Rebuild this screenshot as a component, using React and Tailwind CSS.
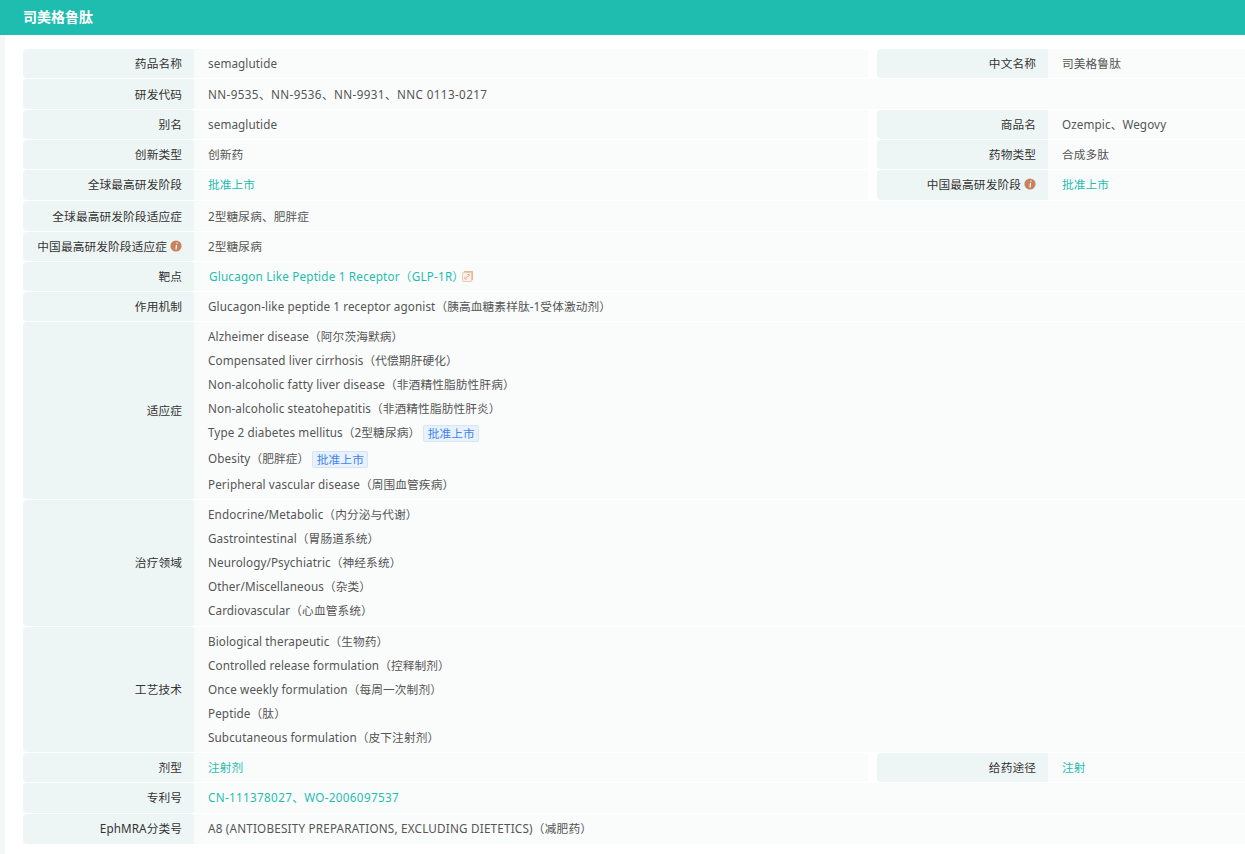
const Info = () => (
  <svg width="12" height="12" viewBox="0 0 12 12" className="ml-[3px] shrink-0">
    <circle cx="6" cy="6" r="5.6" fill="#c8835e" />
    <path d="M6.4 2.5h1.2v1.2H6.4zM5.9 5h1.2l-.5 4.4H5.4z" fill="#fff" />
  </svg>
);

const Ext = () => (
  <svg width="11" height="11" viewBox="0 0 12 12" className="-ml-[2px] shrink-0">
    <rect x="2" y="0" width="10" height="10" rx="1" fill="#e8b596" />
    <rect x="0.5" y="1.5" width="10" height="10" rx="1" fill="#fbf1ea" stroke="#e8c3ab" />
    <path d="M3.5 8 7.5 5M6 3.8l1.8-.2.3 1.8M4.9 9 3 8.4l.2-1.8" fill="none" stroke="#dba684" strokeWidth="1" />
  </svg>
);

const Tag = ({ children }) => (
  <span className="ml-[3px] mt-[2px] inline-flex h-[17px] w-[56px] items-center justify-center rounded-[2px] border border-[#d6e4fb] bg-[#e9f1fd] text-[11.7px] text-[#3f86ee]">
    {children}
  </span>
);

const Label = ({ children, info, pad }) => (
  <div className={`flex w-[171px] shrink-0 items-center justify-end rounded-l-[4px] bg-[#eef6f5] pr-[12px] text-[#333] ${pad}`}>
    {children}
    {info && <Info />}
  </div>
);

const Value = ({ children, className = "text-[#555]", pad }) => (
  <div className={`flex min-w-0 flex-1 flex-col justify-center bg-[#fafcfb] pl-[14px] ${className} ${pad}`}>
    {children}
  </div>
);

const Row = ({ h, label, info, right, children, className, pad = "pb-[0.5px]" }) => (
  <div className="flex" style={{ height: h }}>
    <Label info={info} pad={pad}>{label}</Label>
    <Value className={className} pad={pad}>{children}</Value>
    {right && (
      <>
        <div className="w-[9px] shrink-0 bg-white" />
        <Label info={right.info} pad={pad}>{right.label}</Label>
        <Value className={`w-[197px] flex-none ${right.className || "text-[#555]"}`} pad={pad}>{right.value}</Value>
      </>
    )}
  </div>
);

const Lines = ({ items }) => (
  <div className="flex flex-col">
    {items.map((t) => (
      <div key={t} className="flex h-[24px] items-center whitespace-nowrap">{t}</div>
    ))}
  </div>
);

const teal = "text-[#1fbdaf]";

export default function App() {
  return (
    <div
      className="h-[854px] w-[1245px] overflow-hidden bg-white text-[11.7px] leading-[18px] tracking-[0.1px]"
      style={{ fontFamily: '"Noto Sans","Noto Sans CJK SC",sans-serif' }}
    >
      <div className="flex h-[35px] items-center bg-[#1fbdaf] pb-[1px] pl-[23px] text-[14px] font-bold tracking-normal text-white">司美格鲁肽</div>
      <div className="flex h-[819px]">
        <div className="w-[5px] bg-[#f5f6f8]" />
        <div className="flex-1 pl-[18px] pt-[14px]">
          <div className="flex flex-col gap-[1px]">
            <Row h={29} label="药品名称" right={{ label: "中文名称", value: "司美格鲁肽" }}>semaglutide</Row>
            <Row h={30} pad="pb-0" label="研发代码"><span className="tracking-[0.38px]">NN-9535、NN-9536、NN-9931、NNC 0113-0217</span></Row>
            <Row h={29} label="别名" right={{ label: "商品名", value: "Ozempic、Wegovy" }}>semaglutide</Row>
            <Row h={29} label="创新类型" right={{ label: "药物类型", value: "合成多肽" }}>创新药</Row>
            <Row h={30} pad="pb-[2px]" label="全球最高研发阶段" className={teal} right={{ label: "中国最高研发阶段", info: true, value: "批准上市", className: teal }}>批准上市</Row>
            <Row h={30} pad="pb-0" label="全球最高研发阶段适应症">2型糖尿病、肥胖症</Row>
            <Row h={29} label="中国最高研发阶段适应症" info>2型糖尿病</Row>
            <Row h={29} label="靶点">
              <div className={`flex items-center pl-[1px] tracking-[0.2px] ${teal}`}>Glucagon Like Peptide 1 Receptor（GLP-1R）<Ext /></div>
            </Row>
            <Row h={29} label="作用机制">Glucagon-like peptide 1 receptor agonist（胰高血糖素样肽-1受体激动剂）</Row>
            <Row h={177} label="适应症">
              <div className="flex flex-col">
                <div className="flex h-[24px] items-center">Alzheimer disease（阿尔茨海默病）</div>
                <div className="flex h-[24px] items-center">Compensated liver cirrhosis（代偿期肝硬化）</div>
                <div className="flex h-[24px] items-center">Non-alcoholic fatty liver disease（非酒精性脂肪性肝病）</div>
                <div className="flex h-[24px] items-center">Non-alcoholic steatohepatitis（非酒精性脂肪性肝炎）</div>
                <div className="flex h-[26px] items-center pb-[2px]">Type 2 diabetes mellitus（2型糖尿病）<Tag>批准上市</Tag></div>
                <div className="flex h-[26px] items-center pb-[2px]">Obesity（肥胖症）<Tag>批准上市</Tag></div>
                <div className="flex h-[24px] items-center">Peripheral vascular disease（周围血管疾病）</div>
              </div>
            </Row>
            <Row h={126} pad="pb-[2px]" label="治疗领域">
              <Lines items={["Endocrine/Metabolic（内分泌与代谢）", "Gastrointestinal（胃肠道系统）", "Neurology/Psychiatric（神经系统）", "Other/Miscellaneous（杂类）", "Cardiovascular（心血管系统）"]} />
            </Row>
            <Row h={125} label="工艺技术">
              <Lines items={["Biological therapeutic（生物药）", "Controlled release formulation（控释制剂）", "Once weekly formulation（每周一次制剂）", "Peptide（肽）", "Subcutaneous formulation（皮下注射剂）"]} />
            </Row>
            <Row h={29} label="剂型" className={teal} right={{ label: "给药途径", value: "注射", className: teal }}>注射剂</Row>
            <Row h={30} pad="pb-[2px]" label="专利号" className={teal}><span className="tracking-[0.33px]">CN-111378027、WO-2006097537</span></Row>
            <Row h={30} pad="pb-[2px]" label="EphMRA分类号"><span className="tracking-[0.2px]">A8 (ANTIOBESITY PREPARATIONS, EXCLUDING DIETETICS)（减肥药）</span></Row>
          </div>
        </div>
      </div>
    </div>
  );
}
